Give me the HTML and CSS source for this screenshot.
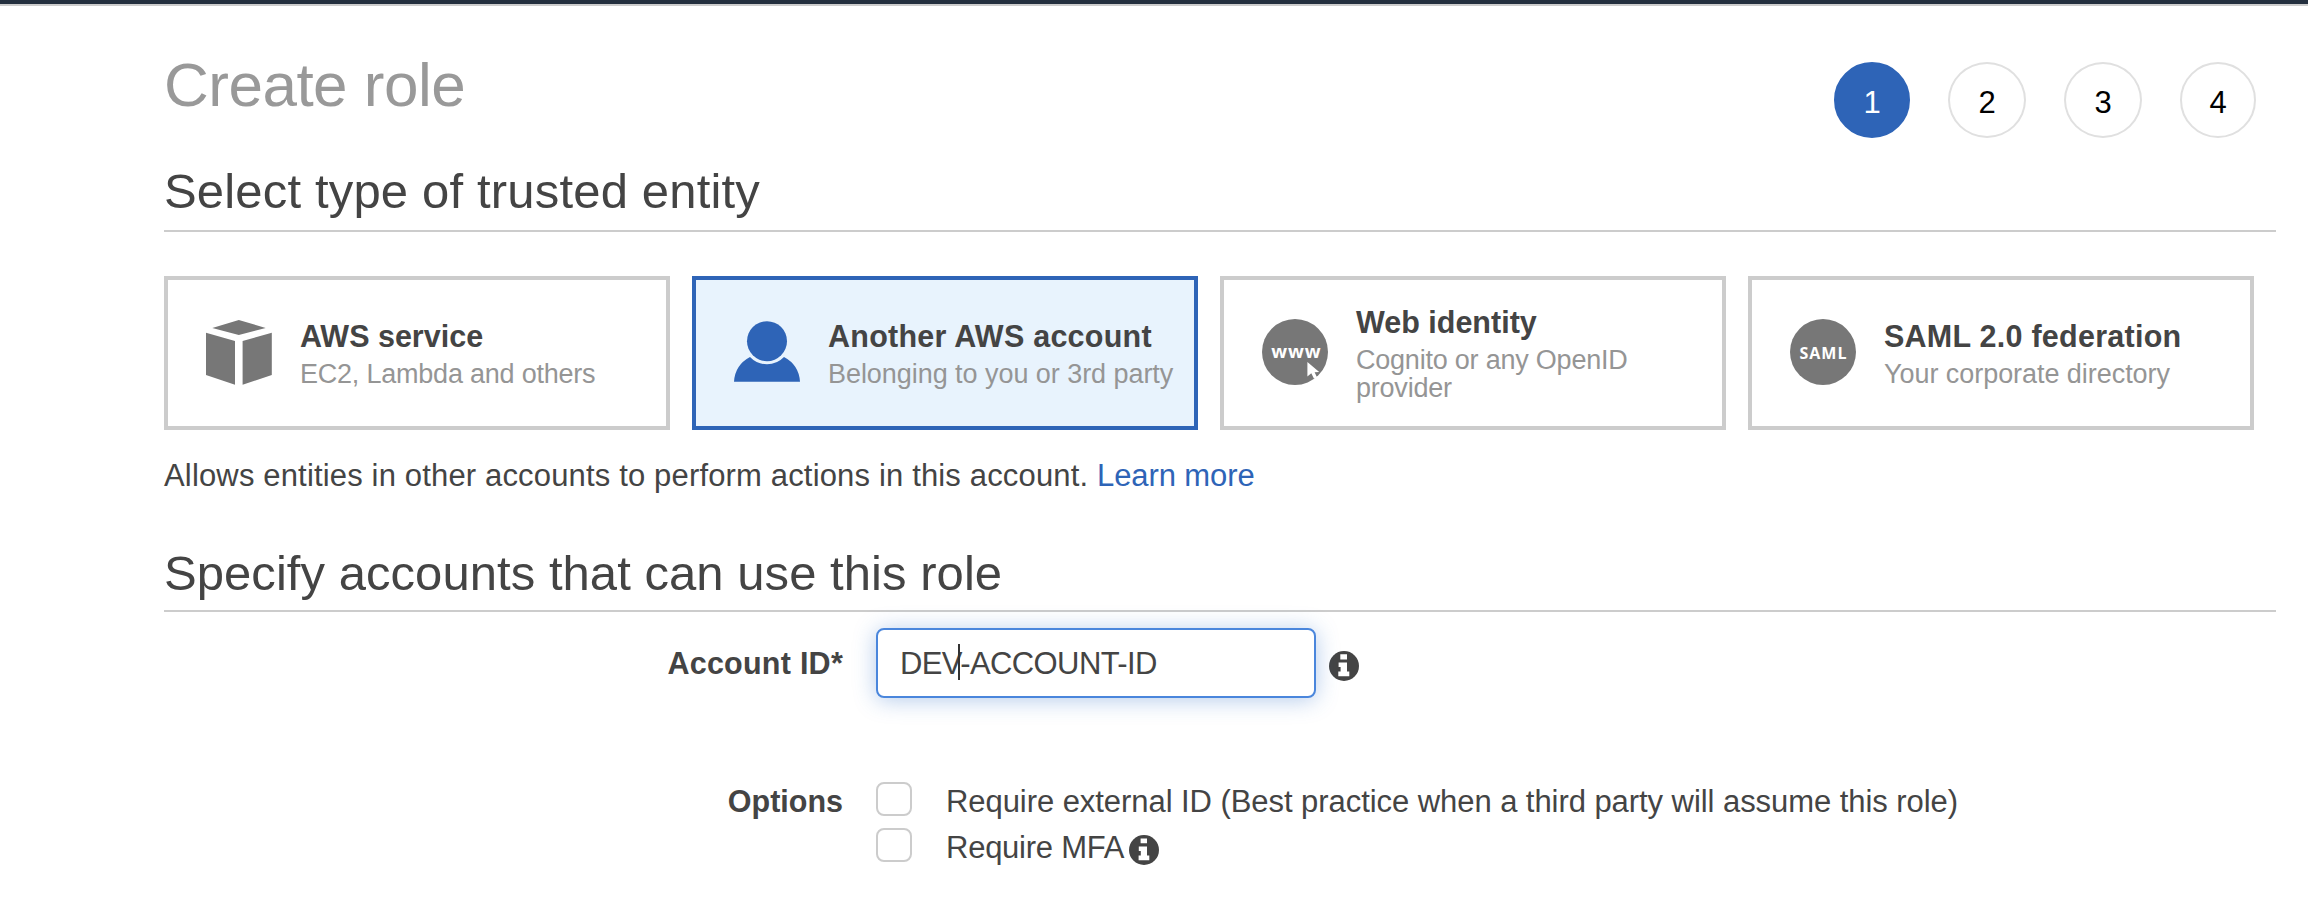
FILE: index.html
```html
<!DOCTYPE html>
<html lang="en">
<head>
<meta charset="utf-8">
<title>Create role</title>
<link rel="stylesheet" href="styles.css">
</head>
<body>
<div class="topbar"></div>
<main class="page">
  <header class="page-header">
    <h1 class="page-title">Create role</h1>
    <ol class="steps">
      <li class="step step-active">1</li>
      <li class="step step-middle">2</li>
      <li class="step step-middle">3</li>
      <li class="step">4</li>
    </ol>
  </header>

  <h2 class="section-title">Select type of trusted entity</h2>
  <div class="cards">
    <div class="card">
      <svg class="card-icon" viewBox="0 0 66 66"><path d="M32.8 1 59.7 9 32.8 16 6.3 9ZM0 13.7 29 22V65.7L0 56ZM36.6 22 65.8 13.7V56L36.6 65.7Z"/></svg>
      <div class="card-body">
        <div class="card-title">AWS service</div>
        <div class="card-text tight">EC2, Lambda and others</div>
      </div>
    </div>
    <div class="card card-selected">
      <svg class="card-icon" viewBox="0 0 66 66"><circle cx="33" cy="22.2" r="20"/><path d="M16 38Q1 46 0 62.7H66Q65 46 50 38Q43 45.3 33 45.3Q23 45.3 16 38Z"/></svg>
      <div class="card-body">
        <div class="card-title loose">Another AWS account</div>
        <div class="card-text">Belonging to you or 3rd party</div>
      </div>
    </div>
    <div class="card">
      <svg class="card-icon" viewBox="0 0 66 66"><circle cx="33" cy="33" r="33"/><text class="badge-text" x="9.2" y="38.8" font-size="18.5" textLength="49.5">www</text><path class="cursor" d="M45.4 43V57.5L49.3 54.3 52 59.8 55 58.2 52.6 53.2 57.2 53Z"/></svg>
      <div class="card-body">
        <div class="card-title">Web identity</div>
        <div class="card-text tight">Cognito or any OpenID provider</div>
      </div>
    </div>
    <div class="card">
      <svg class="card-icon" viewBox="0 0 66 66"><circle cx="33" cy="33" r="33"/><text class="badge-text" x="9.5" y="39.5" font-size="16" textLength="47">SAML</text></svg>
      <div class="card-body">
        <div class="card-title loose">SAML 2.0 federation</div>
        <div class="card-text">Your corporate directory</div>
      </div>
    </div>
  </div>
  <p class="description">Allows entities in other accounts to perform actions in this account. <a class="link" href="#">Learn more</a></p>

  <h2 class="section-title section-title-accounts">Specify accounts that can use this role</h2>
  <div class="form-row">
    <label class="form-label loose" for="account">Account ID*</label>
    <div class="input-wrap">
      <input class="input" id="account" type="text" value="DEV-ACCOUNT-ID">
      <span class="caret"></span>
    </div>
    <svg class="info info-input" viewBox="0 0 30 30"><circle cx="15" cy="15" r="15"/><path d="M11.3 3.2H18V8.4H11.3ZM9.6 11.6H18V20.6H20.3V25.2H9.3V20.6H11.6V16H9.6Z"/></svg>
  </div>
  <div class="form-row form-options">
    <span class="form-label">Options</span>
    <div class="options">
      <label class="option"><input class="checkbox" type="checkbox"><span>Require external ID (Best practice when a third party will assume this role)</span></label>
      <label class="option"><input class="checkbox" type="checkbox"><span class="mfa">Require MFA</span><svg class="info info-option" viewBox="0 0 30 30"><circle cx="15" cy="15" r="15"/><path d="M11.6 3.4H18V8.2H11.6ZM9.8 11.6H18V20.6H20.3V25.2H9.6V20.6H11.8V16H9.8Z"/></svg></label>
    </div>
  </div>
</main>
</body>
</html>
```

FILE: styles.css
```css
* { box-sizing: border-box; }

body {
  margin: 0;
  background: #fff;
  color: #444;
  font-family: "Liberation Sans", Arial, sans-serif;
  font-size: 31px;
}

.topbar {
  height: 6px;
  background: #232f3e;
  border-bottom: 2px solid #ccc;
}

.page { padding: 0 32px 0 164px; }

.page-header {
  display: flex;
  justify-content: space-between;
  align-items: flex-start;
  height: 144px;
  padding-right: 20px;
}

.page-title {
  margin: 43px 0 0;
  font-size: 62px;
  font-weight: 400;
  line-height: 72px;
  letter-spacing: -0.5px;
  color: #999;
}

.steps {
  display: flex;
  gap: 38px;
  margin: 56px 0 0;
  padding: 0;
  list-style: none;
}

.step {
  width: 76px;
  height: 76px;
  padding-top: 3px;
  border: 2px solid #e0e0e0;
  border-radius: 50%;
  color: #000;
  line-height: 72px;
  text-align: center;
}

.step-middle { width: 78px; }

.step-active {
  background: #2e64b7;
  border-color: #2e64b7;
  color: #fff;
}

.section-title {
  margin: 0;
  padding: 12px 0 10px;
  border-bottom: 2px solid #ccc;
  font-size: 49px;
  font-weight: 400;
  line-height: 58px;
  letter-spacing: 0.17px;
}

.section-title-accounts {
  margin-top: 37px;
  padding-bottom: 8px;
  letter-spacing: 0.05px;
}

.cards {
  display: flex;
  gap: 22px;
  margin-top: 44px;
}

.card {
  display: flex;
  align-items: center;
  gap: 28px;
  width: 506px;
  height: 154px;
  padding: 0 12px 0 38px;
  border: 4px solid #ccc;
}

.card-selected {
  background: #e8f3fd;
  border-color: #2e64b7;
}

.card-icon {
  flex: none;
  width: 66px;
  height: 66px;
  margin-bottom: 2px;
  fill: #777;
}

.card-selected .card-icon { fill: #2e64b7; }

.card-icon .badge-text {
  fill: #fff;
  font-family: "Open Sans", sans-serif;
  font-weight: 700;
}

.card-icon .cursor { fill: #fff; }

.card-title {
  margin-bottom: 6px;
  font-size: 30.5px;
  font-weight: 700;
  line-height: 36px;
}

.card-text {
  color: #959595;
  font-size: 27px;
  line-height: 28px;
  letter-spacing: -0.05px;
}

.card-text.tight { letter-spacing: -0.22px; }

.loose { letter-spacing: 0.25px; }

.description {
  margin: 26px 0 0;
  line-height: 40px;
  letter-spacing: 0.16px;
}

.link {
  color: #2e64b7;
  letter-spacing: -0.1px;
  text-decoration: none;
}

.form-row {
  display: flex;
  align-items: center;
  margin-top: 16px;
}

.form-label {
  width: 679px;
  margin-right: 33px;
  font-size: 30.5px;
  font-weight: 700;
  line-height: 40px;
  text-align: right;
}

.input-wrap { position: relative; }

.input {
  display: block;
  width: 440px;
  height: 70px;
  padding: 1px 22px 0;
  border: 2px solid #4a86dc;
  border-radius: 8px;
  outline: none;
  background: #fff;
  box-shadow: 0 2px 22px rgba(46, 110, 200, 0.36);
  color: #444;
  font-family: inherit;
  font-size: 31px;
  letter-spacing: -0.6px;
}

.caret {
  position: absolute;
  top: 16px;
  left: 82px;
  width: 2px;
  height: 36px;
  background: #333;
}

.info {
  flex: none;
  width: 30px;
  height: 30px;
  fill: #444;
}

.info path { fill: #fff; }

.info-input { margin: 6px 0 0 13px; }

.section-title-accounts { margin-top: 36px; }

.form-options {
  align-items: flex-start;
  margin-top: 80px;
}

.form-options .form-label { padding-top: 3px; }

.option {
  display: flex;
  align-items: center;
  height: 46px;
  line-height: 46px;
  letter-spacing: -0.06px;
}

.option span { padding-top: 1px; }

.checkbox {
  appearance: none;
  width: 36px;
  height: 34px;
  margin: 0 34px 4px 0;
  border: 2px solid #ccc;
  border-radius: 8px;
  background: #fff;
}

.mfa { letter-spacing: -0.25px; }

.info-option { margin: 6px 0 0 5px; }
```
